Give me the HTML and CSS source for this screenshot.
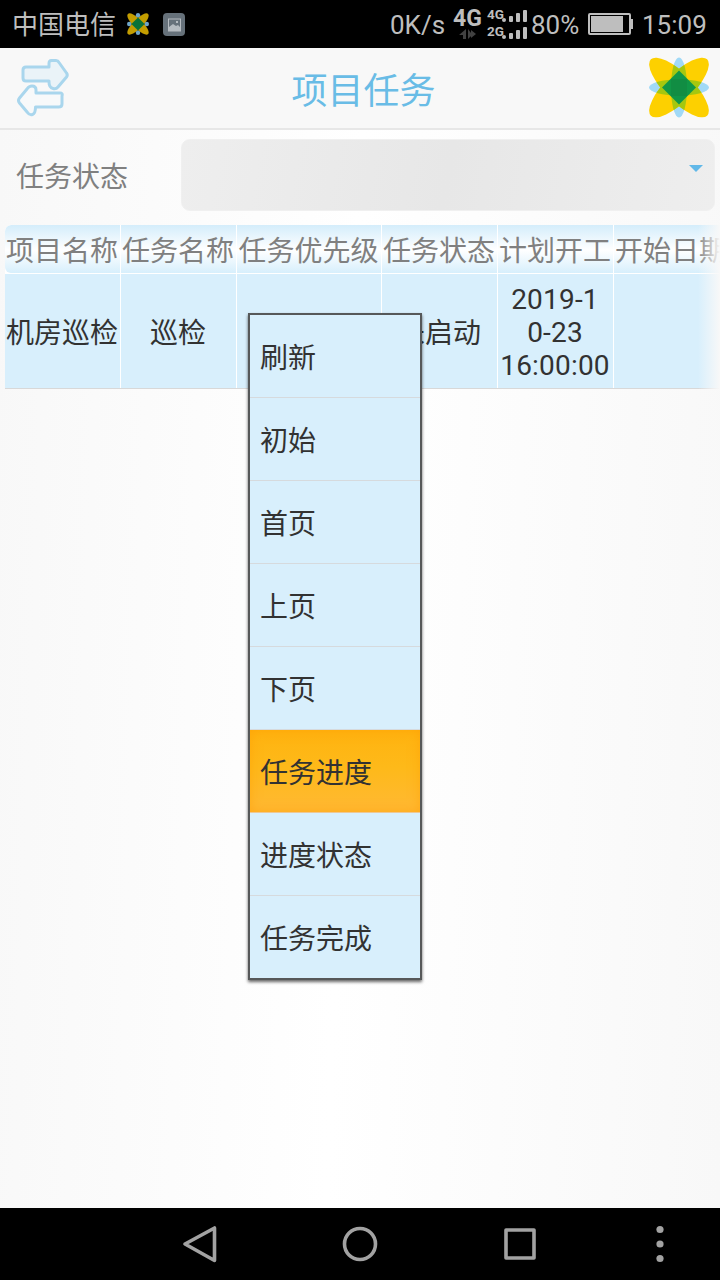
FILE: index.html
```html
<!DOCTYPE html>
<html lang="zh-CN">
<head>
<meta charset="utf-8">
<title>项目任务</title>
<link rel="stylesheet" href="styles.css">
</head>
<body>
<div class="screen">
  <div class="statusbar">
    <span class="carrier">中国电信</span>
    <svg class="mini-logo" width="22" height="22" viewBox="0 0 60 60">
      <g fill="#c39d00"><ellipse cx="30" cy="30" rx="39" ry="13" transform="rotate(45 30 30)"/><ellipse cx="30" cy="30" rx="39" ry="13" transform="rotate(-45 30 30)"/></g>
      <g fill="#6fa5c8"><circle cx="30" cy="6" r="6"/><circle cx="30" cy="54" r="6"/><circle cx="6" cy="30" r="6"/><circle cx="54" cy="30" r="6"/></g>
      <path fill="#087238" d="M30 12 48 30 30 48 12 30z"/>
    </svg>
    <svg class="picture" width="22" height="23" viewBox="0 0 22 23">
      <rect width="22" height="23" rx="4" fill="#66717a"/>
      <rect x="5.500" y="6" width="12" height="12" fill="none" stroke="#b5bbc0"/>
      <path fill="#b5bbc0" d="M6 14l4-3 3 2 2-1 3 3v3H6zM13 8h2v2h-2z"/>
    </svg>
    <span class="speed">0K/s</span>
    <div class="net">
      <span>4G</span>
      <svg width="18" height="10" viewBox="0 0 18 10"><path fill="#414141" d="M7 0v10H4V6H0zM9 0v10l3-3V4zM12 1l5 4-5 4z"/></svg>
    </div>
    <div class="sims">
      <div class="sim"><span>4G</span><svg width="26" height="14" viewBox="0 0 26 14"><g fill="#bebebe"><rect x="0" y="9" width="4" height="4" rx="2"/><rect x="7" y="7" width="4" height="6" rx="1"/><rect x="14" y="4" width="4" height="9" rx="1"/><rect x="21" y="1" width="4" height="12" rx="1"/></g></svg></div>
      <div class="sim"><span>2G</span><svg width="26" height="14" viewBox="0 0 26 14"><g fill="#bebebe"><rect x="0" y="9" width="4" height="4" rx="2"/><rect x="7" y="7" width="4" height="6" rx="1"/><rect x="14" y="4" width="4" height="9" rx="1"/><rect x="21" y="1" width="4" height="12" rx="1"/></g></svg></div>
    </div>
    <span class="percent">80%</span>
    <svg class="battery" width="46" height="22" viewBox="0 0 46 22"><rect x="1" y="1" width="41" height="20" rx="1" fill="none" stroke="#bebebe" stroke-width="2"/><path fill="#bebebe" d="M3 3h32v16H3zM43 6h2v10h-2z"/></svg>
    <span class="clock">15:09</span>
  </div>

  <header class="titlebar">
    <svg class="swap" width="52" height="58" viewBox="0 0 52 58">
      <g fill="#eaf3f8" stroke="#a9d6ed" stroke-width="3" stroke-linejoin="round">
        <path d="M9 8h23V4q0-3 4-2.500h3q2 0 3 2L49.500 14q1.500 2 0 4L41 28q-2 2.500-5 1.500-4-1-4-6.500v-1H9q-3 0-3-3v-8q0-3 3-3z"/>
        <path fill="#f7f9fa" d="M43 34H19v-3q0-4-4-4-3 0-5 3L2.500 39q-2 2.500 0 5l8 9.500q2 3 5 2 3-1 3-7.500h23q3.500 0 3.500-3v-8q1-3-2-3z"/>
      </g>
    </svg>
    <h1>项目任务</h1>
    <svg class="logo" width="60" height="61" viewBox="0 0 60 61">
      <defs>
        <clipPath id="petal-clip"><ellipse cx="30" cy="30.500" rx="39.800" ry="14" transform="rotate(45 30 30.500)"/><ellipse cx="30" cy="30.500" rx="39.800" ry="14" transform="rotate(-45 30 30.500)"/></clipPath>
      </defs>
      <g fill="#a1d9f7"><ellipse cx="30" cy="30.500" rx="8" ry="30"/><ellipse cx="30" cy="30.500" rx="30" ry="8"/></g>
      <g fill="#fdd000"><ellipse cx="30" cy="30.500" rx="39.800" ry="14" transform="rotate(45 30 30.500)"/><ellipse cx="30" cy="30.500" rx="39.800" ry="14" transform="rotate(-45 30 30.500)"/></g>
      <g fill="#a5c70f" clip-path="url(#petal-clip)"><ellipse cx="30" cy="30.500" rx="8" ry="30"/><ellipse cx="30" cy="30.500" rx="30" ry="8"/></g>
      <path fill="#109747" d="M30 13.500 47 30.500 30 47.500 13 30.500z"/>
      <path fill="#118d43" d="M22 22h16v17H22z"/>
    </svg>
  </header>

  <main class="content">
    <div class="filter">
      <label>任务状态</label>
      <div class="select"><svg width="14" height="7" viewBox="0 0 14 7"><path fill="#61b8e8" d="M0 0h14L7 7z"/></svg></div>
    </div>

    <div class="table">
      <div class="row head">
        <div>项目名称</div><div>任务名称</div><div>任务优先级</div><div>任务状态</div><div>计划开工</div><div>开始日期</div>
      </div>
      <div class="row data">
        <div>机房巡检</div><div>巡检</div><div></div><div>未启动</div><div class="date">2019-1<br>0-23<br>16:00:00</div><div></div>
      </div>
      <div class="fade"></div>
    </div>
  </main>

  <nav class="navbar">
    <svg width="560" height="72" viewBox="0 0 560 72" fill="none" stroke="#a2a2a2" stroke-width="3.600" stroke-linejoin="round">
      <path d="M54.500 20v32.500L25 36z"/>
      <circle cx="200" cy="36" r="15.500"/>
      <rect x="346" y="22" width="28" height="28"/>
      <g fill="#a2a2a2" stroke="none"><circle cx="500" cy="21.500" r="3.600"/><circle cx="500" cy="36" r="3.600"/><circle cx="500" cy="50.500" r="3.600"/></g>
    </svg>
  </nav>

  <ul class="menu">
    <li>刷新</li><li>初始</li><li>首页</li><li>上页</li><li>下页</li><li class="active">任务进度</li><li>进度状态</li><li>任务完成</li>
  </ul>
</div>
</body>
</html>
```
FILE: styles.css
```css
* { box-sizing: border-box; }
body { margin: 0; font-family: Roboto, "Noto Sans CJK SC", sans-serif; font-size: 28px; }
svg { display: block; flex: none; }
.screen {
  position: relative; width: 720px; height: 1280px; overflow: hidden;
  display: flex; flex-direction: column;
}
.statusbar {
  height: 48px; flex: none; background: #000; color: #bebebe;
  display: flex; align-items: center; padding-left: 12px;
  font-size: 26px; line-height: 48px; white-space: nowrap;
}
.carrier { width: 104px; padding-top: 1px; }
.mini-logo { margin-left: 11px; }
.picture { margin-left: 14px; }
.speed { width: 64px; margin-left: 205px; padding-top: 2px; }
.net {
  width: 27px; display: flex; flex-direction: column; align-items: center;
  font-weight: 700; font-size: 23px; line-height: 20px; margin-left: 0;
}
.sims { width: 45px; margin-left: 6px; display: flex; flex-direction: column; gap: 3px; }
.sim { display: flex; font-size: 13.5px; font-weight: 700; line-height: 14px; height: 15px; }
.sim span { width: 17px; height: 14px; margin-top: -1px; }
.sim svg { margin-left: -2px; }
.sim:first-child svg { margin-top: 1px; }
.sim:last-child span { margin-top: -2px; }
.percent { width: 50px; margin-left: -1px; padding-top: 2px; }
.battery { margin-left: 7px; }
.clock { margin-left: 8px; padding-top: 2px; }

.titlebar {
  height: 82px; flex: none; background: #f8f8f8; border-bottom: 2px solid #e7e7e7;
  display: flex; padding: 9px 11px 0 17px; justify-content: space-between;
}
.swap { margin-top: 2px; }
.titlebar h1 { margin: 8px 0 0 9px; font-size: 36px; font-weight: 400; line-height: 54px; color: #69bce6; }

.content {
  flex: 1; min-height: 0; padding: 9px 0 0 5px;
  background: linear-gradient(92deg, #f8f8f8, #fff 48%, #f8f8f8);
}
.filter { height: 72px; display: flex; align-items: center; color: #808080; padding-left: 11px; }
.filter label { width: 165px; }
.select {
  width: 534px; height: 72px; border: 1px solid #f0f0f0; border-radius: 9px;
  background: linear-gradient(100deg, #eeeeee, #e7e7e7 50%, #eeeeee);
  display: flex; justify-content: flex-end; padding: 25px 11px 0 0;
}
.table { position: relative; width: 715px; margin-top: 14px; overflow: hidden; border-radius: 6px 0 0 0; }
.row { display: grid; grid-template-columns: 115px 115px 144px 115px 115px 115px; gap: 1px; white-space: nowrap; }
.row > div { display: flex; align-items: center; justify-content: center; padding-right: 1px; }
.head { height: 49px; border-bottom: 1px solid #fff; background: #fff; color: #808080; }
.head > div { background: linear-gradient(#d4edfb, #fff 52%, #d7effc); }
.head > div:first-child { border-radius: 6px 0 0 6px; }
.data { height: 115px; background: #fff; border-bottom: 1px solid #d8d8d8; color: #323232; }
.data > div { background: #d8effc; }
.data .date { line-height: 33px; text-align: center; padding-top: 3px; letter-spacing: .2px; }
.fade {
  position: absolute; top: 0; right: 0; width: 22px; height: 100%;
  background: linear-gradient(90deg, rgba(248,248,248,0), #f8f8f8);
}

.navbar { height: 72px; flex: none; background: #000; padding-left: 160px; }

.menu {
  position: absolute; left: 248px; top: 313px; width: 174px; height: 667px;
  margin: 0; padding: 0; list-style: none; border: 2px solid #565859;
  background: #d8effc; color: #323232; box-shadow: 0 2px 3px rgba(0,0,0,.6);
}
.menu li { height: 83px; padding: 5px 0 0 10px; line-height: 78px; border-bottom: 1px solid #d6dadd; }
.menu li:last-child { border-bottom: 0; }
.menu .active {
  background: linear-gradient(#ffb30f, #feb919 45%, #ffb934);
  box-shadow: inset 0 0 12px rgba(255,155,0,.55);
  border-bottom-color: #edc895;
}
```
